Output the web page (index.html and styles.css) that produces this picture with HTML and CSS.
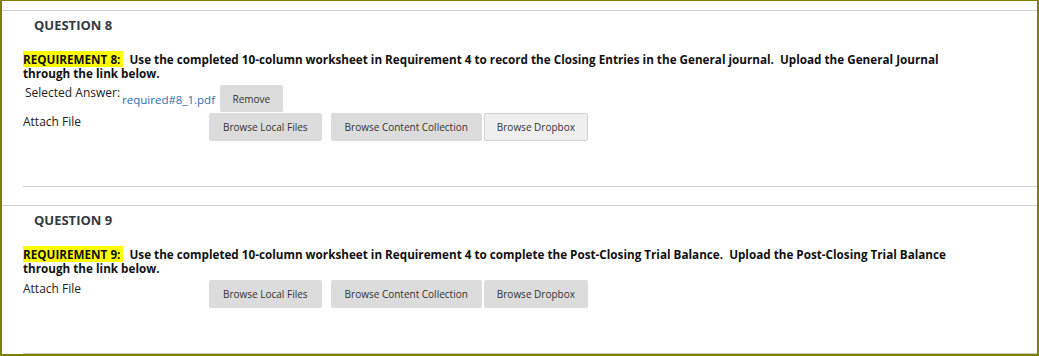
FILE: index.html
```html
<!DOCTYPE html>
<html lang="en">
<head>
<meta charset="utf-8">
<title>Questions</title>
<link rel="stylesheet" href="styles.css">
</head>
<body>
<div class="frame">
  <section class="question">
    <h3 class="q-title">QUESTION 8</h3>
    <p class="req"><mark class="hl">REQUIREMENT 8:&nbsp;</mark>&nbsp; Use the completed 10-column worksheet in Requirement 4 to record the Closing Entries in the General journal.&nbsp; Upload the General Journal through the link below.</p>
    <div class="answer-row">
      <span class="answer-label">Selected Answer:</span>
      <a class="file-link" href="#">required#8_1.pdf</a>
      <button class="btn btn-remove" type="button">Remove</button>
    </div>
    <div class="attach-row">
      <span class="attach-label">Attach File</span>
      <div class="btn-group">
        <button class="btn btn-local" type="button">Browse Local Files</button>
        <button class="btn btn-content" type="button">Browse Content Collection</button>
        <button class="btn btn-dropbox is-active" type="button">Browse Dropbox</button>
      </div>
    </div>
    <hr class="sep">
  </section>
  <section class="question">
    <h3 class="q-title">QUESTION 9</h3>
    <p class="req"><mark class="hl">REQUIREMENT 9:&nbsp;</mark>&nbsp; Use the completed 10-column worksheet in Requirement 4 to complete the Post-Closing Trial Balance.&nbsp; Upload the Post-Closing Trial Balance through the link below.</p>
    <div class="attach-row">
      <span class="attach-label">Attach File</span>
      <div class="btn-group">
        <button class="btn btn-local" type="button">Browse Local Files</button>
        <button class="btn btn-content" type="button">Browse Content Collection</button>
        <button class="btn btn-dropbox" type="button">Browse Dropbox</button>
      </div>
    </div>
    <hr class="sep">
  </section>
</div>
</body>
</html>
```

FILE: styles.css
```css
html, body {
  margin: 0;
  padding: 0;
  background: #fff;
}

body {
  font-family: "Open Sans", "Liberation Sans", sans-serif;
  color: #333;
}

.frame {
  box-sizing: border-box;
  width: 1039px;
  height: 356px;
  border: 2px solid #808000;
  border-top-width: 1px;
  padding-top: 9px;
  overflow: hidden;
  background: #fff;
}

.question {
  border-top: 1px solid #cfcfcf;
  padding-top: 5px;
  padding-bottom: 18px;
}

.q-title {
  margin: 0;
  padding-left: 32px;
  font-size: 13px;
  line-height: 19px;
  font-weight: 700;
  color: #333a44;
}

.req {
  margin: 17px 0 5px 21px;
  width: 950px;
  font-size: 11.7px;
  line-height: 14px;
  font-weight: 700;
  color: #111;
}

.hl {
  background: #ffff00;
  color: #111;
}

.answer-row {
  display: flex;
  align-items: flex-start;
  padding-left: 23px;
  height: 27px;
  margin-bottom: 1px;
}

.answer-label {
  flex: 0 0 95px;
  white-space: nowrap;
  font-size: 12px;
  line-height: 16px;
  color: #222;
}

.file-link {
  align-self: center;
  margin: 2px 5px 0 2px;
  white-space: nowrap;
  font-size: 11.5px;
  line-height: 16px;
  color: #2c6fb5;
  text-decoration: none;
}

.attach-row {
  display: flex;
  align-items: flex-start;
  padding-left: 21px;
}

.attach-label {
  flex: 0 0 186px;
  font-size: 12px;
  line-height: 16px;
  color: #222;
  margin-top: 1px;
}

.btn-group {
  display: flex;
}

.btn {
  box-sizing: border-box;
  height: 28px;
  padding: 0 13px;
  border: 1px solid #dcdcdc;
  border-radius: 2px;
  background: #dcdcdc;
  font-family: "Open Sans", "Liberation Sans", sans-serif;
  font-size: 10px;
  color: #333;
  white-space: nowrap;
  cursor: pointer;
}

.btn-remove {
  height: 27px;
  padding: 0 11.5px;
}

.btn-local {
  margin-right: 9px;
}

.btn-content {
  margin-right: 2px;
}

.btn-dropbox {
  padding: 0 12px;
}

.btn-dropbox.is-active {
  background: #efefef;
  border-color: #d2d2d2;
}

.sep {
  margin: 45px 0 0 21px;
  border: 0;
  border-top: 1px solid #cfcfcf;
  height: 0;
}
```
